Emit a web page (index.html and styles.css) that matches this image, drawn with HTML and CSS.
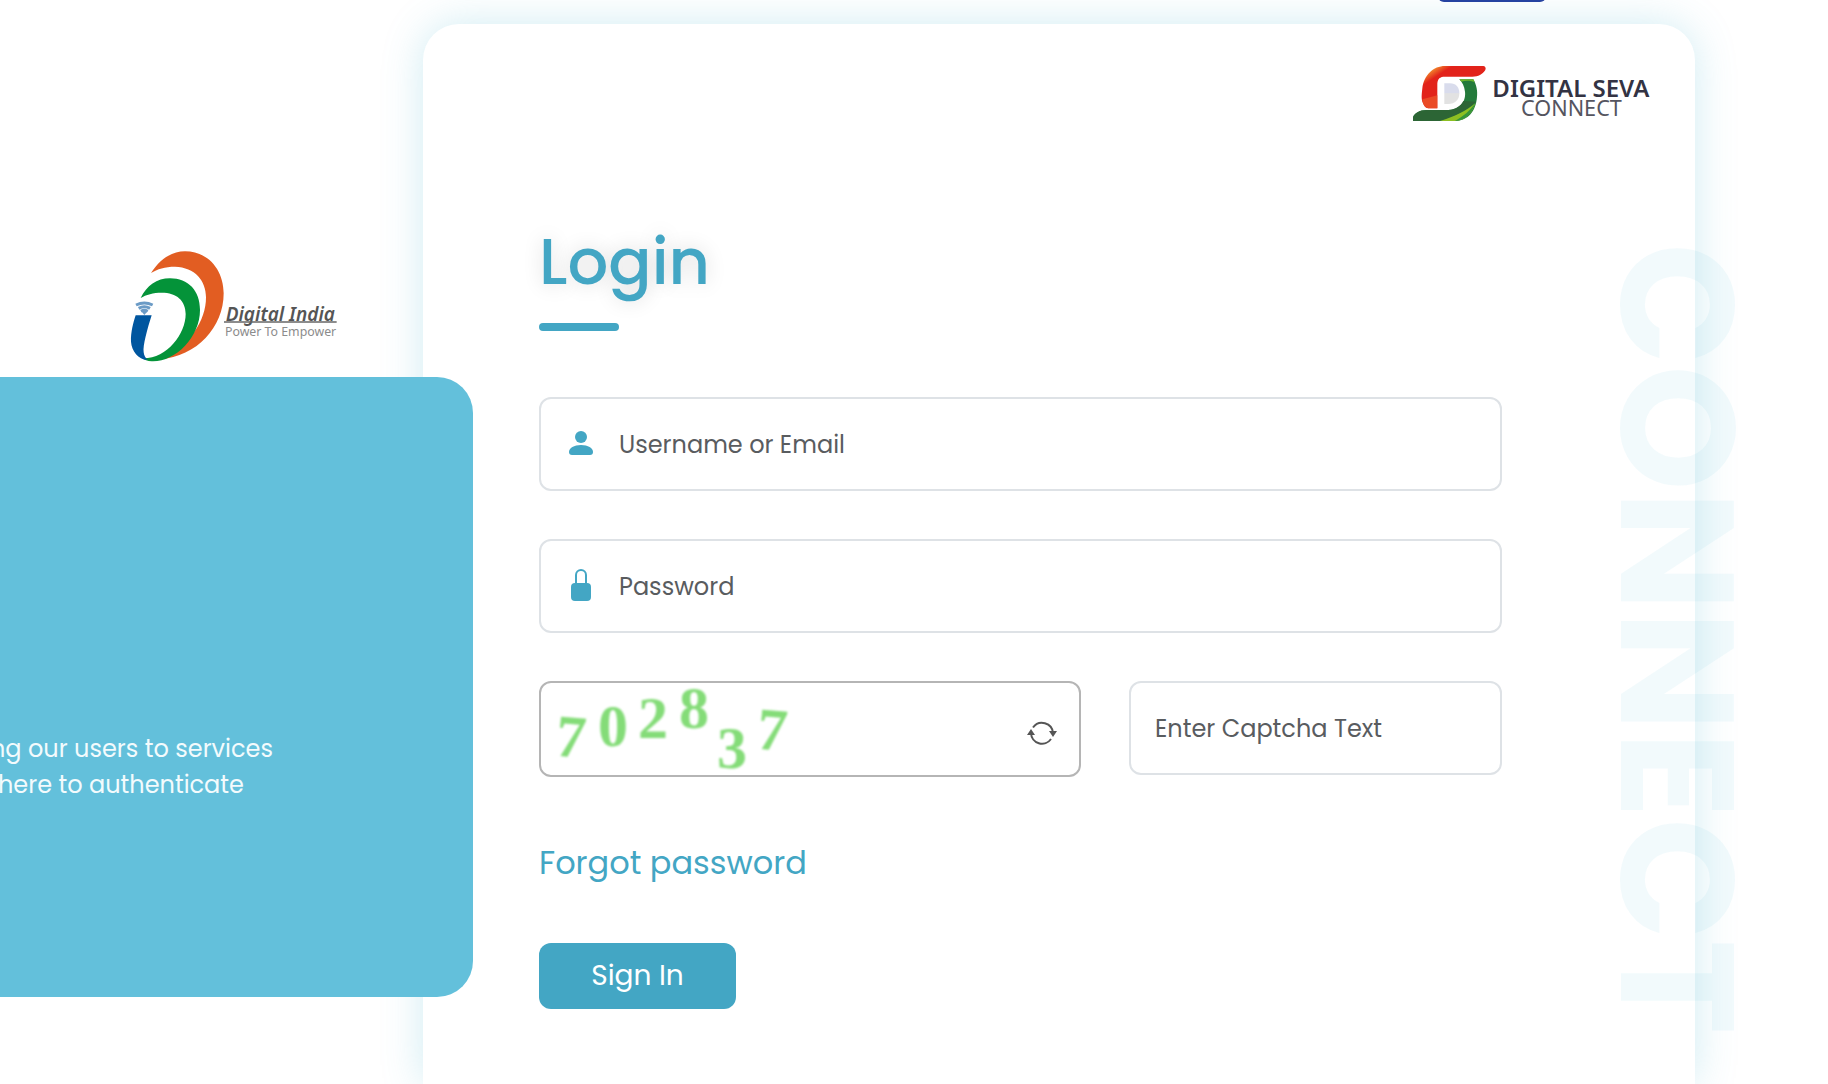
FILE: index.html
```html
<!DOCTYPE html>
<html lang="en">
<head>
<meta charset="utf-8">
<meta name="viewport" content="width=device-width, initial-scale=1">
<title>Login - Digital Seva Connect</title>
<link rel="stylesheet" href="styles.css">
</head>
<body>
<div class="page">
  <header class="topbar"><span class="topbar-tab"></span></header>
  <main class="layout">
    <aside class="intro">
      <svg class="india-logo" viewBox="90 55 630 345" role="img" aria-label="Digital India, Power To Empower">
        <path fill="#e25d22" d="M153 127C180 85 215 62 255 62C325 62 371 118 371 188C371 290 290 378 180 386C270 345 318 270 318 200C318 150 285 110 225 108C195 108 172 115 153 127Z"/>
        <path fill="#049339" d="M122 202C140 165 170 143 210 143C265 143 300 180 300 238C300 320 225 395 155 392C142 391 133 388 128 383C200 385 257 310 257 250C257 210 230 186 185 186C160 186 138 192 122 202Z"/>
        <path fill="#00569f" d="M107 254H155C142 295 128 345 131 365C132 375 136 382 143 387C116 388 95 362 93 333C92 305 100 275 107 254Z"/>
        <g fill="none" stroke="#6b9bc6" stroke-width="9">
          <path d="M108 223Q133 211 158 223"/>
          <path d="M116 233Q133 223 150 233"/>
          <path d="M123 242Q133 236 143 242"/>
        </g>
        <path fill="#6b9bc6" d="M123 240H144L133 253Z"/>
        <text class="india-name" x="377" y="270">Digital India</text>
        <path stroke="#666" stroke-width="4" d="M372 274H710"/>
        <text class="india-tagline" x="375" y="315">Power To Empower</text>
      </svg>
      <div class="intro-panel">
        <p class="intro-text">ng our users to services<br>here to authenticate</p>
      </div>
    </aside>
    <section class="card">
      <svg class="seva-logo" viewBox="99 198 723 168" role="img" aria-label="Digital Seva Connect">
        <defs>
          <linearGradient id="red" x1="0" y1="0" x2="1" y2="1">
            <stop offset="0.12" stop-color="#f28a2c"/>
            <stop offset="0.24" stop-color="#e2231a"/>
          </linearGradient>
          <linearGradient id="grey" x1="0" y1="0" x2="0" y2="1">
            <stop offset="0.45" stop-color="#d9dcec"/>
            <stop offset="0.5" stop-color="#e2e2e2"/>
          </linearGradient>
        </defs>
        <path fill="url(#red)" d="M132 315C122 300 125 285 127 265C132 225 160 198 195 198H310C320 200 318 210 312 215C303 226 290 230 270 230H190C176 232 172 240 172 255V325H145C138 325 134 320 132 315Z"/>
        <path fill="#ea4a26" d="M127 298L172 286V325H145C133 322 128 312 127 298Z"/>
        <path fill="#247a3b" d="M238 238H280C290 255 293 275 291 290C288 335 262 362 225 363H99V352C103 340 118 330 140 330H205C245 328 258 300 255 275C253 258 247 247 238 238Z"/>
        <path fill="#2c6535" d="M99 363V352C103 340 118 330 140 330H205C228 328 242 318 250 303L288 305C255 335 225 350 180 363Z"/>
        <path fill="#6fb52c" d="M238 238H280L284 246C268 241 255 242 244 245Z"/>
        <path fill="#8dbf22" d="M180 363C225 350 262 330 286 310C277 340 256 362 225 363Z"/>
        <path fill="#35963a" d="M225 363C250 350 270 332 286 310C277 340 256 362 225 363Z"/>
        <path fill="url(#grey)" d="M193 250H210C228 250 238 262 238 280C238 300 225 312 205 312H193Z"/>
        <text class="seva-name" x="337" y="290">DIGITAL SEVA</text>
        <text class="seva-sub" x="423" y="349">CONNECT</text>
      </svg>
      <h1 class="title">Login</h1>
      <form class="form">
        <label class="field">
          <svg class="field-icon" viewBox="0 0 24 32" aria-hidden="true">
            <circle cx="12" cy="10" r="6"/>
            <path d="M3 28C1 28 0 27 0 25C0 21 5 18 12 18S24 21 24 25C24 27 23 28 21 28Z"/>
          </svg>
          <input class="field-input" type="text" placeholder="Username or Email" aria-label="Username or Email">
        </label>
        <label class="field">
          <svg class="field-icon" viewBox="0 0 24 32" aria-hidden="true">
            <path class="shackle" d="M7 15V6a5 5 0 0 1 10 0V15"/>
            <rect x="2" y="14" width="20" height="18" rx="4"/>
          </svg>
          <input class="field-input" type="password" placeholder="Password" aria-label="Password">
        </label>
        <div class="captcha-row">
          <div class="captcha">
            <svg class="captcha-code" viewBox="0 0 260 92" role="img" aria-label="Captcha code">
              <text x="15" y="74" transform="rotate(5 30 54)">7</text>
              <text x="57" y="63">0</text>
              <text x="97" y="55">2</text>
              <text x="138" y="45">8</text>
              <text x="176" y="85">3</text>
              <text x="216" y="67" transform="rotate(5 231 48)">7</text>
            </svg>
            <button class="refresh" type="button" aria-label="Refresh captcha">
              <svg class="refresh-icon" viewBox="0 0 30 24">
                <path d="M6 6.500A11 11 0 0 1 26 12M24 18A11 11 0 0 1 4 12" fill="none" stroke="#555" stroke-width="2"/>
                <path d="M0 14L4 8L8 14ZM22 10H30L26 16Z" fill="#555"/>
              </svg>
            </button>
          </div>
          <label class="field captcha-field">
            <input class="field-input" type="text" placeholder="Enter Captcha Text" aria-label="Enter Captcha Text">
          </label>
        </div>
        <a class="forgot" href="#">Forgot password</a>
        <button class="submit" type="submit">Sign In</button>
      </form>
      <div class="watermark" aria-hidden="true">CONNECT</div>
    </section>
  </main>
</div>
</body>
</html>
```
FILE: styles.css
```css
* {
  box-sizing: border-box;
}

body {
  margin: 0;
  background: #fff;
  font-family: Poppins, Inter, sans-serif;
  color: #595c5f;
}

.page {
  display: flex;
  flex-direction: column;
  min-height: 100vh;
  overflow: hidden;
}

.topbar {
  display: flex;
  justify-content: flex-end;
  height: 24px;
  padding-right: 282px;
}

.topbar-tab {
  width: 108px;
  height: 12px;
  margin-top: -10px;
  border-radius: 12px;
  background: #2640a0;
}

.layout {
  display: flex;
  flex: 1;
  padding-right: 133px;
}

.intro {
  z-index: 1;
  flex: none;
  width: 473px;
  margin-right: -50px;
  padding-top: 225px;
}

.india-logo {
  display: block;
  width: 210px;
  height: 115px;
  margin: 0 0 13px 130px;
}

.india-name {
  font: italic 600 57px "Noto Sans", sans-serif;
  fill: #555;
}

.india-tagline {
  font: 400 37px "Noto Sans", sans-serif;
  fill: #8c8c8c;
}

.intro-panel {
  padding: 354px 0 194px;
  border-radius: 0 36px 36px 0;
  background: #63c0db;
}

.intro-text {
  margin: 0 0 0 -2px;
  font-size: 24px;
  line-height: 36px;
  text-indent: -8px;
  white-space: nowrap;
  color: #f3fbfd;
}

.card {
  position: relative;
  display: flex;
  flex: 1;
  flex-direction: column;
  min-width: 0;
  padding: 42px 193px 75px 116px;
  border-radius: 36px 36px 0 0;
  background: #fff;
  box-shadow: 0 0 40px rgba(67, 181, 206, 0.25);
}

.seva-logo {
  align-self: flex-end;
  width: 241px;
  height: 56px;
  margin-right: -152px;
  overflow: visible;
}

.seva-name {
  font: 600 72px "Noto Sans", sans-serif;
  fill: #333343;
}

.seva-sub {
  font: 400 65px "Noto Sans", sans-serif;
  fill: #55555f;
}

.title {
  margin: 104px 0 66px;
  font-size: 64px;
  font-weight: 500;
  line-height: 72px;
  color: #43a6c4;
  text-shadow: 0 0 20px rgba(0, 0, 0, 0.15);
}

.title::after {
  content: "";
  display: block;
  width: 80px;
  height: 8px;
  margin-top: 25px;
  border-radius: 4px;
  background: #43a6c4;
}

.form {
  display: flex;
  flex-direction: column;
  align-items: flex-start;
  gap: 48px;
}

.field {
  display: flex;
  align-items: center;
  gap: 26px;
  width: 100%;
  height: 94px;
  padding: 0 24px 0 28px;
  border: 2px solid #dee2e6;
  border-radius: 12px;
  background: #fff;
}

.field-icon {
  flex: none;
  width: 24px;
  height: 32px;
  margin-bottom: 2px;
  fill: #43a6c4;
}

.shackle {
  fill: none;
  stroke: #43a6c4;
  stroke-width: 2;
}

.field-input {
  flex: 1;
  min-width: 0;
  height: 60px;
  padding: 0;
  border: 0;
  outline: 0;
  background: none;
  font: inherit;
  font-size: 24px;
  color: inherit;
}

.field-input::placeholder {
  color: #595c5f;
  opacity: 1;
}

.captcha-row {
  display: grid;
  grid-template-columns: minmax(0, 542fr) minmax(0, 373fr);
  gap: 48px;
  width: 100%;
}

.captcha {
  display: flex;
  align-items: center;
  justify-content: space-between;
  height: 96px;
  padding-right: 22px;
  border: 2px solid #b5b5b5;
  border-radius: 12px;
}

.captcha-code {
  width: 260px;
  height: 92px;
  overflow: visible;
  font: 700 60px "Liberation Serif", serif;
  fill: #84dc78;
  filter: blur(1px);
}

.captcha-field {
  padding: 0 24px;
}

.refresh {
  display: flex;
  padding: 8px 0 0;
  border: 0;
  background: none;
}

.refresh-icon {
  width: 30px;
  height: 24px;
}

.forgot {
  margin-top: 20px;
  font-size: 32px;
  line-height: 36px;
  text-decoration: none;
  color: #43a6c4;
}

.submit {
  width: 197px;
  height: 66px;
  margin-top: 14px;
  padding: 0;
  border: 0;
  border-radius: 12px;
  background: #43a6c4;
  font: inherit;
  font-size: 28px;
  color: #fff;
}

.watermark {
  position: absolute;
  top: 219px;
  right: -60px;
  font-size: 160px;
  font-weight: 700;
  line-height: 156px;
  writing-mode: vertical-rl;
  white-space: nowrap;
  color: rgba(67, 181, 206, 0.07);
  pointer-events: none;
}
```
